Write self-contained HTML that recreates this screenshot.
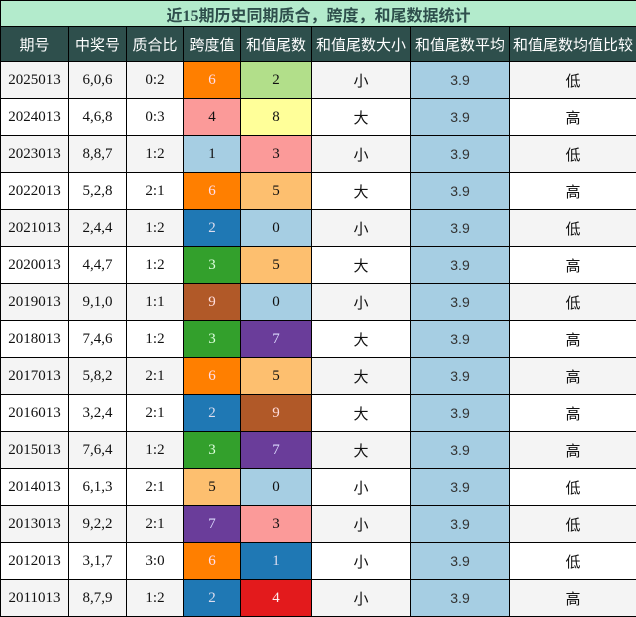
<!DOCTYPE html><html><head><meta charset="utf-8"><style>
body{margin:0;background:#fff}
table{border-collapse:collapse;table-layout:fixed;width:636px;font-family:"Liberation Serif","Noto Serif CJK SC",serif;font-size:15px;color:#111}
td,th{border:1px solid #000;text-align:center;padding:0;overflow:hidden;white-space:nowrap}
.t td{height:25px;background:#b3ebcc;color:#2e4f4c;font-weight:bold;font-size:16px;font-family:"Liberation Serif","Noto Sans CJK SC",sans-serif}
.h th{height:34px;background:#2e4f4c;color:#fff;font-weight:normal;font-family:"Liberation Sans","Noto Sans CJK SC",sans-serif;font-size:15px}
tr.r td{height:36px}
tr.r:nth-child(odd) td{background:#f4f4f4}
.s{font-family:"Liberation Sans","Noto Sans CJK SC",sans-serif}
td.a{background:#a6cee3!important;font-family:"Liberation Sans",sans-serif;font-size:14px;color:#333}
.c0{background:#ff7f00!important;color:#fde!important}.c1{background:#b2df8a!important}.c2{background:#fb9a99!important}.c3{background:#ffff99!important}
.c4{background:#a6cee3!important}.c5{background:#fdbf6f!important}.c6{background:#1f78b4!important;color:#dde!important}.c7{background:#33a02c!important;color:#dfd!important}
.c8{background:#b15928!important;color:#fdd!important}.c9{background:#6a3d9a!important;color:#ddf!important}.c10{background:#e31a1c!important;color:#fee!important}
</style></head><body><table>
<colgroup><col style="width:68px"><col style="width:58px"><col style="width:57px"><col style="width:57px"><col style="width:71px"><col style="width:99px"><col style="width:99px"><col style="width:127px"></colgroup>
<tr class="t"><td colspan="8">近15期历史同期质合，跨度，和尾数据统计</td></tr>
<tr class="h"><th>期号</th><th>中奖号</th><th>质合比</th><th>跨度值</th><th>和值尾数</th><th>和值尾数大小</th><th>和值尾数平均</th><th>和值尾数均值比较</th></tr>
<tr class="r"><td>2025013</td><td>6,0,6</td><td>0:2</td><td class="c0">6</td><td class="c1">2</td><td class="s">小</td><td class="a">3.9</td><td class="s">低</td></tr>
<tr class="r"><td>2024013</td><td>4,6,8</td><td>0:3</td><td class="c2">4</td><td class="c3">8</td><td class="s">大</td><td class="a">3.9</td><td class="s">高</td></tr>
<tr class="r"><td>2023013</td><td>8,8,7</td><td>1:2</td><td class="c4">1</td><td class="c2">3</td><td class="s">小</td><td class="a">3.9</td><td class="s">低</td></tr>
<tr class="r"><td>2022013</td><td>5,2,8</td><td>2:1</td><td class="c0">6</td><td class="c5">5</td><td class="s">大</td><td class="a">3.9</td><td class="s">高</td></tr>
<tr class="r"><td>2021013</td><td>2,4,4</td><td>1:2</td><td class="c6">2</td><td class="c4">0</td><td class="s">小</td><td class="a">3.9</td><td class="s">低</td></tr>
<tr class="r"><td>2020013</td><td>4,4,7</td><td>1:2</td><td class="c7">3</td><td class="c5">5</td><td class="s">大</td><td class="a">3.9</td><td class="s">高</td></tr>
<tr class="r"><td>2019013</td><td>9,1,0</td><td>1:1</td><td class="c8">9</td><td class="c4">0</td><td class="s">小</td><td class="a">3.9</td><td class="s">低</td></tr>
<tr class="r"><td>2018013</td><td>7,4,6</td><td>1:2</td><td class="c7">3</td><td class="c9">7</td><td class="s">大</td><td class="a">3.9</td><td class="s">高</td></tr>
<tr class="r"><td>2017013</td><td>5,8,2</td><td>2:1</td><td class="c0">6</td><td class="c5">5</td><td class="s">大</td><td class="a">3.9</td><td class="s">高</td></tr>
<tr class="r"><td>2016013</td><td>3,2,4</td><td>2:1</td><td class="c6">2</td><td class="c8">9</td><td class="s">大</td><td class="a">3.9</td><td class="s">高</td></tr>
<tr class="r"><td>2015013</td><td>7,6,4</td><td>1:2</td><td class="c7">3</td><td class="c9">7</td><td class="s">大</td><td class="a">3.9</td><td class="s">高</td></tr>
<tr class="r"><td>2014013</td><td>6,1,3</td><td>2:1</td><td class="c5">5</td><td class="c4">0</td><td class="s">小</td><td class="a">3.9</td><td class="s">低</td></tr>
<tr class="r"><td>2013013</td><td>9,2,2</td><td>2:1</td><td class="c9">7</td><td class="c2">3</td><td class="s">小</td><td class="a">3.9</td><td class="s">低</td></tr>
<tr class="r"><td>2012013</td><td>3,1,7</td><td>3:0</td><td class="c0">6</td><td class="c6">1</td><td class="s">小</td><td class="a">3.9</td><td class="s">低</td></tr>
<tr class="r"><td>2011013</td><td>8,7,9</td><td>1:2</td><td class="c6">2</td><td class="c10">4</td><td class="s">小</td><td class="a">3.9</td><td class="s">高</td></tr>
</table></body></html>
